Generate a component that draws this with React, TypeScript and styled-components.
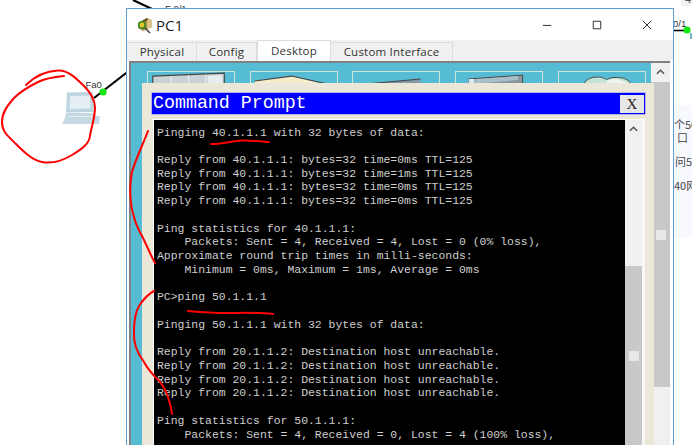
import React from 'react';
import styled, { createGlobalStyle } from 'styled-components';

const GlobalStyle = createGlobalStyle`
  html, body {
    margin: 0;
    padding: 0;
    background: #fff;
  }
`;

const terminalLines = `Pinging 40.1.1.1 with 32 bytes of data:

Reply from 40.1.1.1: bytes=32 time=0ms TTL=125
Reply from 40.1.1.1: bytes=32 time=1ms TTL=125
Reply from 40.1.1.1: bytes=32 time=0ms TTL=125
Reply from 40.1.1.1: bytes=32 time=0ms TTL=125

Ping statistics for 40.1.1.1:
    Packets: Sent = 4, Received = 4, Lost = 0 (0% loss),
Approximate round trip times in milli-seconds:
    Minimum = 0ms, Maximum = 1ms, Average = 0ms

PC>ping 50.1.1.1

Pinging 50.1.1.1 with 32 bytes of data:

Reply from 20.1.1.2: Destination host unreachable.
Reply from 20.1.1.2: Destination host unreachable.
Reply from 20.1.1.2: Destination host unreachable.
Reply from 20.1.1.2: Destination host unreachable.

Ping statistics for 50.1.1.1:
    Packets: Sent = 4, Received = 0, Lost = 4 (100% loss),`;

const tabs = [
  { label: 'Physical', width: 69 },
  { label: 'Config', width: 60 },
  { label: 'Desktop', width: 74, active: true },
  { label: 'Custom Interface', width: 122 },
];

export default function App() {
  return (
    <>
      <GlobalStyle />
      <Stage>
        <Topology />
        <SideNotes>
          <NoteLine $top={12} $x={0}>个50</NoteLine>
          <NoteLine $top={25} $x={3}>口</NoteLine>
          <NoteLine $top={49} $x={1}>问50</NoteLine>
          <NoteLine $top={73} $x={0}>40网</NoteLine>
        </SideNotes>
        <TopChip>4.</TopChip>

        <PortLabel $x={85.5} $y={79}>Fa0</PortLabel>
        <PortLabel $x={165} $y={3}>F 0/1</PortLabel>
        <PortLabel $x={673} $y={18}>0/1</PortLabel>

        <Window>
          <TitleBar>
            <SimIcon />
            <WindowTitle>PC1</WindowTitle>
            <WindowControls>
              <ControlIcon viewBox="0 0 12 12">
                <path d="M1 6.5h10" />
              </ControlIcon>
              <ControlIcon viewBox="0 0 12 12">
                <path d="M1.5 1.5h9v9h-9z" />
              </ControlIcon>
              <ControlIcon viewBox="0 0 12 12">
                <path d="M1 1l10 10M11 1L1 11" />
              </ControlIcon>
            </WindowControls>
          </TitleBar>

          <TabBar>
            {tabs.map((tab) => (
              <Tab key={tab.label} $width={tab.width} $active={tab.active}>
                {tab.label}
              </Tab>
            ))}
          </TabBar>

          <Pane>
            <Content>
              <AppCard><WindowArt /></AppCard>
              <AppCard><EnvelopeArt /></AppCard>
              <AppCard><FolderArt /></AppCard>
              <AppCard><MonitorArt /></AppCard>
              <AppCard><CloudArt /></AppCard>

              <Dialog>
                <DialogHeader>
                  <DialogTitle>Command Prompt</DialogTitle>
                  <CloseButton>X</CloseButton>
                </DialogHeader>
                <TerminalRow>
                  <Screen>{terminalLines}</Screen>
                  <InnerScroll>
                    <ScrollUp $height={146}><Chevron /></ScrollUp>
                    <Thumb $height={180}><Grip /></Thumb>
                  </InnerScroll>
                </TerminalRow>
              </Dialog>
            </Content>
            <OuterScroll>
              <ScrollUp $height={19}><Chevron /></ScrollUp>
              <Thumb $height={305}><Grip /></Thumb>
            </OuterScroll>
          </Pane>
        </Window>

        <Annotations />
      </Stage>
    </>
  );
}

function Topology() {
  return (
    <CanvasSvg viewBox="0 0 692 445">
      <path d="M133 0L152 9" stroke="#000" strokeWidth="2.2" />
      <path d="M94 98L130 70" stroke="#000" strokeWidth="2.2" />
      <path d="M672 30.5H687" stroke="#000" strokeWidth="1.6" />
      <circle cx="103" cy="92" r="3.6" fill="#12e812" />
      <circle cx="687" cy="30" r="3.6" fill="#12e812" />
      <rect x="690" y="33" width="2" height="6" fill="#7fb4c4" />

      {/* the PC node */}
      <path d="M67 92.5l26-.5 1 20-28 .5z" fill="#bcd5e0" />
      <path d="M70 96l20-.5.5 13-21 .5z" fill="#e6eff3" />
      <path d="M66 113h28l2 3h4l-1 8H62l3-6z" fill="#c5d9e2" />
      <path d="M68 116.5h24" stroke="#e4eef2" strokeWidth="1" />
    </CanvasSvg>
  );
}

function Annotations() {
  return (
    <CanvasSvg viewBox="0 0 692 445">
      <g fill="none" stroke="#f00" strokeWidth="2" strokeLinecap="round" strokeLinejoin="round">
        <path d="M26 85C34 77 46 71 58 70.5C68 70 76 78 84 86C90 92 95 100 95 108C95 118 91 128 90 136C89 144 82 149 72 155C62 161 52 164 42 162C32 160 24 152 16 144C8 136 2 132 2 122C2 112 8 105 14 98C20 92 28 87 38 82C46 78 54 77 64 76" />
        <path d="M211 144C222 144 232 141 242 140.5C252 140 262 142 269 142" />
        <path d="M148 131C144 142 136 158 132 172C129 186 130 205 134 217C136 226 140 232 143 238C147 246 151 256 155 263" />
        <path d="M154 291C148 294 143 300 139 306C135 313 134 322 134 332C133 345 138 354 144 362C148 370 155 377 160 382C165 388 168 396 170 404C171 408 172 411 172 414" />
        <path d="M188 311C200 312 212 313 226 313C240 313 258 312 273 314" />
      </g>
    </CanvasSvg>
  );
}

function SimIcon() {
  return (
    <TitleIcon viewBox="0 0 18 20">
      <path d="M3 8l9-5 5 2v7l-9 4-5-3z" fill="#b08a4a" />
      <path d="M12 3l5 2v7l-5 2z" fill="#d9c38a" />
      <path d="M3 8l9-5 1 2-9 5z" fill="#6b5426" />
      <circle cx="7" cy="10" r="4" fill="#3b8a22" />
      <circle cx="7" cy="10" r="2.4" fill="#e2c62a" />
      <path d="M10 13l5 5" stroke="#444" strokeWidth="1.6" />
    </TitleIcon>
  );
}

function Chevron() {
  return (
    <ChevronSvg viewBox="0 0 10 6">
      <path d="M1 5l4-4 4 4" />
    </ChevronSvg>
  );
}

function WindowArt() {
  return (
    <ArtSvg viewBox="0 0 88 14">
      <path d="M5 4L79 1v13H5z" fill="#c9d2d4" stroke="#444" strokeWidth="1.2" />
      <path d="M24 4v10M42 3v11M60 2.5V14" stroke="#f0f4f4" strokeWidth="1" />
      <path d="M62 3.5L77 3v11H62z" fill="#e6eef0" />
    </ArtSvg>
  );
}

function EnvelopeArt() {
  return (
    <ArtSvg viewBox="0 0 88 14">
      <path d="M4 9L42 4l40 10H4z" fill="#f6eecb" />
      <path d="M4 9L42 4 78 12" fill="none" stroke="#444" strokeWidth="1.1" />
    </ArtSvg>
  );
}

function FolderArt() {
  return (
    <ArtSvg viewBox="0 0 88 14">
      <path d="M5 13L70 7v7H5z" fill="#7f9aa4" />
      <path d="M5 13L70 7" fill="none" stroke="#444" strokeWidth="1.2" />
    </ArtSvg>
  );
}

function MonitorArt() {
  return (
    <ArtSvg viewBox="0 0 88 14">
      <path d="M13 7L69 3v11H13z" fill="#8b979c" stroke="#444" strokeWidth="1" />
      <path d="M13 7h6v7h-6z" fill="#d8eaf2" />
      <path d="M20 7l44-3v4L20 12z" fill="#a8c0cc" />
    </ArtSvg>
  );
}

function CloudArt() {
  return (
    <ArtSvg viewBox="0 0 88 14">
      <path d="M25 14C27 8 32 5 40 5C46 5 48 7 50 8C53 5 60 5 66 6C72 8 74 10 75 14z" fill="#c4e4d8" stroke="#444" strokeWidth="1" />
      <path d="M50 8C56 6 64 7 70 11L72 14H48z" fill="#eef4f0" />
    </ArtSvg>
  );
}

const Stage = styled.div`
  position: relative;
  width: 692px;
  height: 445px;
  overflow: hidden;
  background: #fff;
`;

const CanvasSvg = styled.svg`
  position: absolute;
  left: 0;
  top: 0;
  width: 692px;
  height: 445px;
  pointer-events: none;
`;

const PortLabel = styled.span<{ $x: number; $y: number }>`
  position: absolute;
  left: ${(p) => p.$x}px;
  top: ${(p) => p.$y}px;
  font: 9.5px/12px 'Liberation Sans', sans-serif;
  color: #333;
`;

const SideNotes = styled.div`
  position: absolute;
  left: 674px;
  top: 105px;
  width: 18px;
  height: 133px;
  background: #f8f8ff;
`;

const NoteLine = styled.span<{ $top: number; $x: number }>`
  position: absolute;
  left: ${(p) => p.$x}px;
  top: ${(p) => p.$top}px;
  font: 11px/14px 'Noto Sans CJK SC', sans-serif;
  color: #444;
  white-space: nowrap;
`;

const TopChip = styled.span`
  position: absolute;
  left: 681px;
  top: -7px;
  width: 11px;
  height: 13px;
  box-sizing: border-box;
  padding-left: 4px;
  background: #f2f2f2;
  font: 11px/13px 'Liberation Sans', sans-serif;
  color: #555;
  overflow: hidden;
`;

const Window = styled.div`
  position: absolute;
  left: 126px;
  top: 8px;
  width: 548px;
  height: 520px;
  box-sizing: border-box;
  border: 1px solid #5b9fd8;
  background: #fff;
  display: flex;
  flex-direction: column;
`;

const TitleBar = styled.div`
  height: 31px;
  flex: none;
  display: flex;
  align-items: center;
  padding-left: 8px;
`;

const TitleIcon = styled.svg`
  width: 18px;
  height: 20px;
`;

const WindowTitle = styled.span`
  margin-left: 3px;
  font: 15px/18px 'Open Sans', sans-serif;
  color: #222;
`;

const WindowControls = styled.div`
  margin-left: auto;
  margin-right: 21px;
  display: flex;
  gap: 40px;
`;

const ControlIcon = styled.svg`
  width: 10px;
  height: 10px;
  fill: none;
  stroke: #333;
  stroke-width: 1.2;
`;

const TabBar = styled.div`
  height: 21px;
  flex: none;
  display: flex;
  align-items: flex-end;
  padding-left: 1px;
  background: #f0f0f0;
`;

const Tab = styled.div<{ $width: number; $active?: boolean }>`
  box-sizing: border-box;
  width: ${(p) => p.$width}px;
  height: ${(p) => (p.$active ? 21 : 19)}px;
  padding-bottom: ${(p) => (p.$active ? 2 : 1)}px;
  border: 1px solid #dcdcdc;
  border-bottom: 0;
  border-left-width: ${(p) => (p.$active ? 1 : 0)}px;
  background: ${(p) => (p.$active ? '#fff' : '#f0f0f0')};
  display: flex;
  align-items: center;
  justify-content: center;
  font: 11.5px/15px 'Open Sans', sans-serif;
  letter-spacing: 0.22px;
  color: #333;
`;

const Pane = styled.div`
  position: relative;
  flex: 1;
  margin: 0 3px 0 2px;
  border-top: 2px solid #808080;
  border-left: 2px solid #808080;
  display: flex;
  min-height: 0;
`;

const Content = styled.div`
  position: relative;
  flex: 1;
  box-sizing: border-box;
  padding: 8px 0 0 16px;
  background: #55bcd4;
  display: flex;
  align-items: flex-start;
  gap: 14.7px;
`;

const AppCard = styled.div`
  box-sizing: border-box;
  width: 88px;
  height: 40px;
  flex: none;
  border: 1.5px solid #cfe3dc;
`;

const ArtSvg = styled.svg`
  display: block;
  width: 85px;
  height: 14px;
`;

const Dialog = styled.div`
  position: absolute;
  left: 11px;
  top: 20px;
  width: 512px;
  height: 480px;
  box-sizing: border-box;
  padding: 10px 9px 0 10px;
  background: #ebe8da;
`;

const DialogHeader = styled.div`
  box-sizing: border-box;
  height: 21px;
  background: #0000ff;
  box-shadow: 0 0 0 0.5px #8080e8;
  display: flex;
  align-items: center;
  justify-content: space-between;
  padding: 0 1px 0 1px;
`;

const DialogTitle = styled.div`
  color: #fff;
  font: 18.3px/21px 'Liberation Mono', monospace;
  white-space: pre;
`;

const CloseButton = styled.div`
  width: 24px;
  height: 18px;
  background: #e6e6e6;
  text-align: center;
  font: 15px/18px 'Liberation Serif', serif;
  color: #222;
`;

const TerminalRow = styled.div`
  margin: 5px 0 0 1px;
  height: 440px;
  border-top: 1px solid #fff;
  border-left: 1px solid #fff;
  border-right: 3px solid #f8f8f8;
  display: flex;
`;

const Screen = styled.pre`
  flex: 1;
  margin: 0;
  padding: 5.5px 0 0 3px;
  background: #000;
  color: #cfcfcf;
  font: 11.45px/13.73px 'Liberation Mono', monospace;
  white-space: pre;
  overflow: hidden;
`;

const InnerScroll = styled.div`
  width: 17px;
  flex: none;
  display: flex;
  flex-direction: column;
`;

const OuterScroll = styled.div`
  width: 19px;
  flex: none;
  display: flex;
  flex-direction: column;
  background: #f0f0f0;
`;

const ScrollUp = styled.div<{ $height: number }>`
  height: ${(p) => p.$height}px;
  flex: none;
  box-sizing: border-box;
  padding-top: 6px;
  background: #f0f0f0;
  display: flex;
  justify-content: center;
`;

const ChevronSvg = styled.svg`
  width: 9px;
  height: 6px;
  fill: none;
  stroke: #505050;
  stroke-width: 1.6;
`;

const Thumb = styled.div<{ $height: number }>`
  height: ${(p) => p.$height}px;
  flex: none;
  background: #c8c8c8;
  display: flex;
  align-items: center;
  justify-content: center;
`;

const Grip = styled.div`
  width: 10px;
  height: 10px;
  background: #e8e8e8;
`;
